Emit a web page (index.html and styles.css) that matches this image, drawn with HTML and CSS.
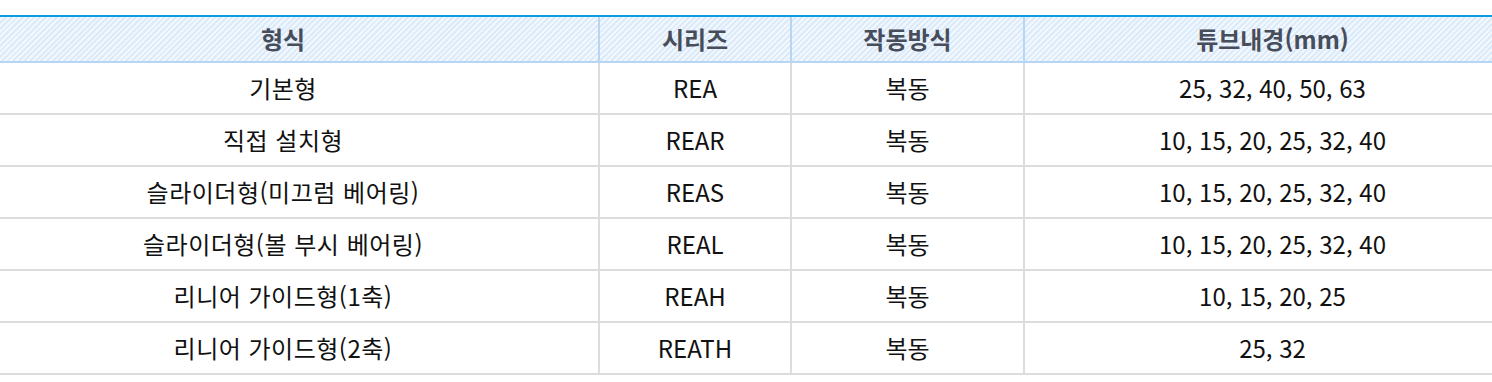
FILE: index.html
```html
<!DOCTYPE html>
<html lang="ko">
<head>
<meta charset="utf-8">
<link rel="stylesheet" href="styles.css">
</head>
<body>
<div class="frame">
<table class="spec">
  <colgroup>
    <col class="c1"><col class="c2"><col class="c3"><col class="c4">
  </colgroup>
  <thead>
    <tr><th>형식</th><th>시리즈</th><th>작동방식</th><th>튜브내경(mm)</th></tr>
  </thead>
  <tbody>
    <tr><td>기본형</td><td>REA</td><td>복동</td><td>25, 32, 40, 50, 63</td></tr>
    <tr><td>직접 설치형</td><td>REAR</td><td>복동</td><td>10, 15, 20, 25, 32, 40</td></tr>
    <tr><td>슬라이더형(미끄럼 베어링)</td><td>REAS</td><td>복동</td><td>10, 15, 20, 25, 32, 40</td></tr>
    <tr><td>슬라이더형(볼 부시 베어링)</td><td>REAL</td><td>복동</td><td>10, 15, 20, 25, 32, 40</td></tr>
    <tr><td>리니어 가이드형(1축)</td><td>REAH</td><td>복동</td><td>10, 15, 20, 25</td></tr>
    <tr><td>리니어 가이드형(2축)</td><td>REATH</td><td>복동</td><td>25, 32</td></tr>
  </tbody>
</table>
</div>
</body>
</html>
```
FILE: styles.css
```css
html, body {
  margin: 0;
  padding: 0;
  background: #ffffff;
  overflow: hidden;
}
body {
  padding-top: 15px;
  font-family: "Noto Sans CJK KR", "Noto Sans", sans-serif;
}
.frame {
  width: 1492px;
  overflow: hidden;
}
.spec {
  width: 1552px;
  margin-left: -32px;
  border-collapse: collapse;
  table-layout: fixed;
}
.c1 { width: 631px; }
.c2 { width: 192px; }
.c3 { width: 233px; }
.c4 { width: auto; }
.spec th {
  height: 44px;
  padding: 0;
  border-top: 2px solid #0e9be2;
  border-bottom: 2px solid #b6d6f4;
  border-left: 2px solid #b6d6f4;
  background: repeating-linear-gradient(135deg, #f1f7fd 0, #f1f7fd 2px, #dbebf9 2px, #dbebf9 4px);
  color: #474d5b;
  font-size: 24px;
  line-height: 1;
  font-weight: 700;
  text-align: center;
  vertical-align: middle;
}
.spec td {
  height: 50px;
  padding: 0;
  border-bottom: 2px solid #dcdcdc;
  border-left: 2px solid #dcdcdc;
  color: #111111;
  font-size: 24px;
  line-height: 1;
  text-align: center;
  vertical-align: middle;
}
.spec td:first-child {
  letter-spacing: 0.5px;
}
.spec th:first-child,
.spec td:first-child {
  border-left: none;
}
```
